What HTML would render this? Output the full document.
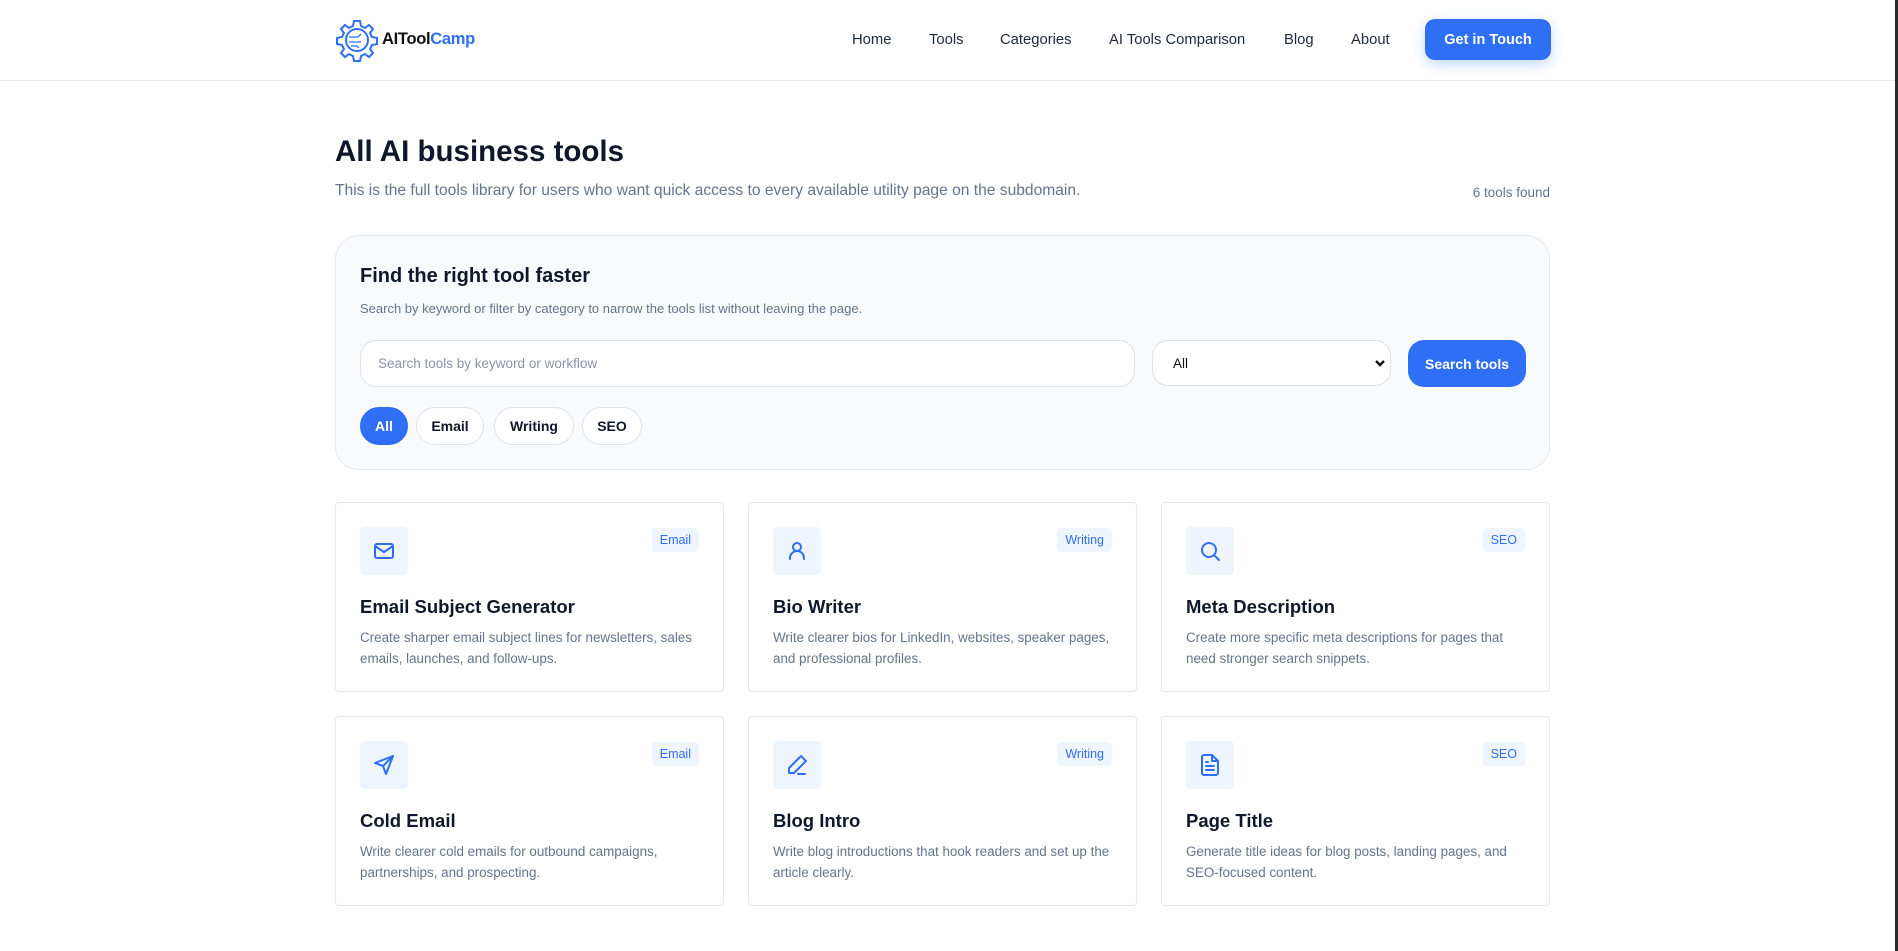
<!DOCTYPE html>
<html><head><meta charset="utf-8"><style>
*{box-sizing:border-box;margin:0;padding:0}
body{width:1898px;height:951px;overflow:hidden;background:#fff;font-family:"Liberation Sans",sans-serif;color:#0f172a;position:relative}
.abs{position:absolute}
.hdr{left:0;top:0;width:1895px;height:81px;border-bottom:1px solid #e2e8f0}
.edge{right:0;top:0;width:3px;height:951px;background:#2b2b2b}
.nav a{position:absolute;top:32px;font-size:14.8px;color:#1e293b;text-decoration:none}
.btn{background:#2f6ff5;color:#fff;font-weight:bold;border-radius:10px;display:flex;align-items:center;justify-content:center}
.panel{left:335px;top:235px;width:1215px;height:235px;background:#f8fafc;border:1px solid #e2e8f0;border-radius:24px}
.inp{background:#fff;border:1px solid #dbe3ef;border-radius:16px;height:47px;top:340px;display:flex;align-items:center;font-size:13.5px}
.chip{top:407px;height:38px;border-radius:19px;border:1px solid #dbe3ef;background:#fff;font-size:14px;font-weight:bold;display:flex;align-items:center;justify-content:center;color:#0f172a}
.card{width:389px;height:190px;border:1px solid #e2e8f0;border-radius:4px;background:#fff}
.ib{position:absolute;left:24px;top:24px;width:48px;height:48px;background:#eff5ff;border-radius:4px;display:flex;align-items:center;justify-content:center}
.bd{position:absolute;right:24px;top:25px;height:24px;padding:0 8px;background:#eff5ff;border-radius:4px;color:#2f6ff5;font-size:12.5px;line-height:24px}
.ct{position:absolute;left:24px;top:93px;font-size:18.5px;font-weight:bold;color:#0f172a}
.cd{position:absolute;left:24px;top:124px;width:340px;font-size:13.4px;line-height:21px;color:#64748b}
svg.i{width:24px;height:24px;fill:none;stroke:#2f6ff5;stroke-width:2;stroke-linecap:round;stroke-linejoin:round}
</style></head><body>
<div class="abs hdr"></div>
<div class="abs edge"></div>
<svg class="abs" style="left:335px;top:18px" width="44" height="44" viewBox="0 0 44 44" fill="none" stroke="#2f6ff5" stroke-width="2">
<path d="M19 3h6l1 5 4 2 4-3 4 4-3 4 2 4 5 1v6l-5 1-2 4 3 4-4 4-4-3-4 2-1 5h-6l-1-5-4-2-4 3-4-4 3-4-2-4-5-1v-6l5-1 2-4-3-4 4-4 4 3 4-2z"/>
<circle cx="22" cy="22" r="11"/><path d="M14 19h9l3-3M14 24h12M16 28h6l2 2" stroke-width="1.3"/>
</svg>
<div class="abs" style="left:382px;top:30px;font-size:16.5px;font-weight:bold;letter-spacing:-0.3px"><span style="color:#111">AITool</span><span style="color:#2f6ff5">Camp</span></div>
<div class="nav">
<a style="left:852px">Home</a><a style="left:929px">Tools</a><a style="left:1000px">Categories</a><a style="left:1109px">AI Tools Comparison</a><a style="left:1284px">Blog</a><a style="left:1351px">About</a>
</div>
<div class="abs btn" style="left:1425px;top:19px;width:126px;height:41px;font-size:14.5px;box-shadow:0 4px 12px rgba(47,111,245,.3)">Get in Touch</div>

<div class="abs" style="left:335px;top:135px;font-size:29.5px;font-weight:bold">All AI business tools</div>
<div class="abs" style="left:335px;top:182px;font-size:15.6px;color:#64748b">This is the full tools library for users who want quick access to every available utility page on the subdomain.</div>
<div class="abs" style="right:348px;top:185px;font-size:13.5px;color:#64748b">6 tools found</div>

<div class="abs panel"></div>
<div class="abs" style="left:360px;top:265px;font-size:20px;font-weight:bold;color:#0f172a">Find the right tool faster</div>
<div class="abs" style="left:360px;top:301px;font-size:13px;color:#64748b">Search by keyword or filter by category to narrow the tools list without leaving the page.</div>
<div class="abs inp" style="left:360px;width:775px;padding-left:17px;color:#8a94a6">Search tools by keyword or workflow</div>
<div class="abs inp" style="left:1152px;width:239px;padding-left:20px;color:#111;height:46px">All<svg style="position:absolute;right:4px;top:18px" width="12" height="9" viewBox="0 0 12 9"><path d="M2 2l4 4 4-4" stroke="#111" stroke-width="2.4" fill="none"/></svg></div>
<div class="abs btn" style="left:1408px;top:340px;width:118px;height:47px;border-radius:16px;font-size:14px">Search tools</div>
<div class="abs chip" style="left:360px;width:48px;background:#2f6ff5;border-color:#2f6ff5;color:#fff">All</div>
<div class="abs chip" style="left:416px;width:68px">Email</div>
<div class="abs chip" style="left:494px;width:80px">Writing</div>
<div class="abs chip" style="left:582px;width:60px">SEO</div>

<div class="abs card" style="left:335px;top:502px"><div class="ib"><svg class="i" viewBox="0 0 24 24"><rect x="3" y="5" width="18" height="14" rx="2"/><path d="M3 7l9 6 9-6"/></svg></div><div class="bd">Email</div><div class="ct">Email Subject Generator</div><div class="cd">Create sharper email subject lines for newsletters, sales emails, launches, and follow-ups.</div></div>
<div class="abs card" style="left:748px;top:502px"><div class="ib"><svg class="i" viewBox="0 0 24 24"><circle cx="12" cy="8" r="4"/><path d="M5 20v-1a7 7 0 0 1 14 0v1"/></svg></div><div class="bd">Writing</div><div class="ct">Bio Writer</div><div class="cd">Write clearer bios for LinkedIn, websites, speaker pages, and professional profiles.</div></div>
<div class="abs card" style="left:1161px;top:502px"><div class="ib"><svg class="i" viewBox="0 0 24 24"><circle cx="11" cy="11" r="7"/><path d="M21 21l-5-5"/></svg></div><div class="bd">SEO</div><div class="ct">Meta Description</div><div class="cd">Create more specific meta descriptions for pages that need stronger search snippets.</div></div>

<div class="abs card" style="left:335px;top:716px"><div class="ib"><svg class="i" viewBox="0 0 24 24"><path d="M21 3L3 10l8 3 3 8z"/><path d="M21 3L11 13"/></svg></div><div class="bd">Email</div><div class="ct">Cold Email</div><div class="cd">Write clearer cold emails for outbound campaigns, partnerships, and prospecting.</div></div>
<div class="abs card" style="left:748px;top:716px"><div class="ib"><svg class="i" viewBox="0 0 24 24"><path d="M16 3l5 5L9 20H4v-5z"/><path d="M13 21h7"/></svg></div><div class="bd">Writing</div><div class="ct">Blog Intro</div><div class="cd">Write blog introductions that hook readers and set up the article clearly.</div></div>
<div class="abs card" style="left:1161px;top:716px"><div class="ib"><svg class="i" viewBox="0 0 24 24"><path d="M14 2H6a2 2 0 0 0-2 2v16a2 2 0 0 0 2 2h12a2 2 0 0 0 2-2V8z"/><path d="M14 2v6h6M8 13h8M8 17h8M8 9h2"/></svg></div><div class="bd">SEO</div><div class="ct">Page Title</div><div class="cd">Generate title ideas for blog posts, landing pages, and SEO-focused content.</div></div>
</body></html>
